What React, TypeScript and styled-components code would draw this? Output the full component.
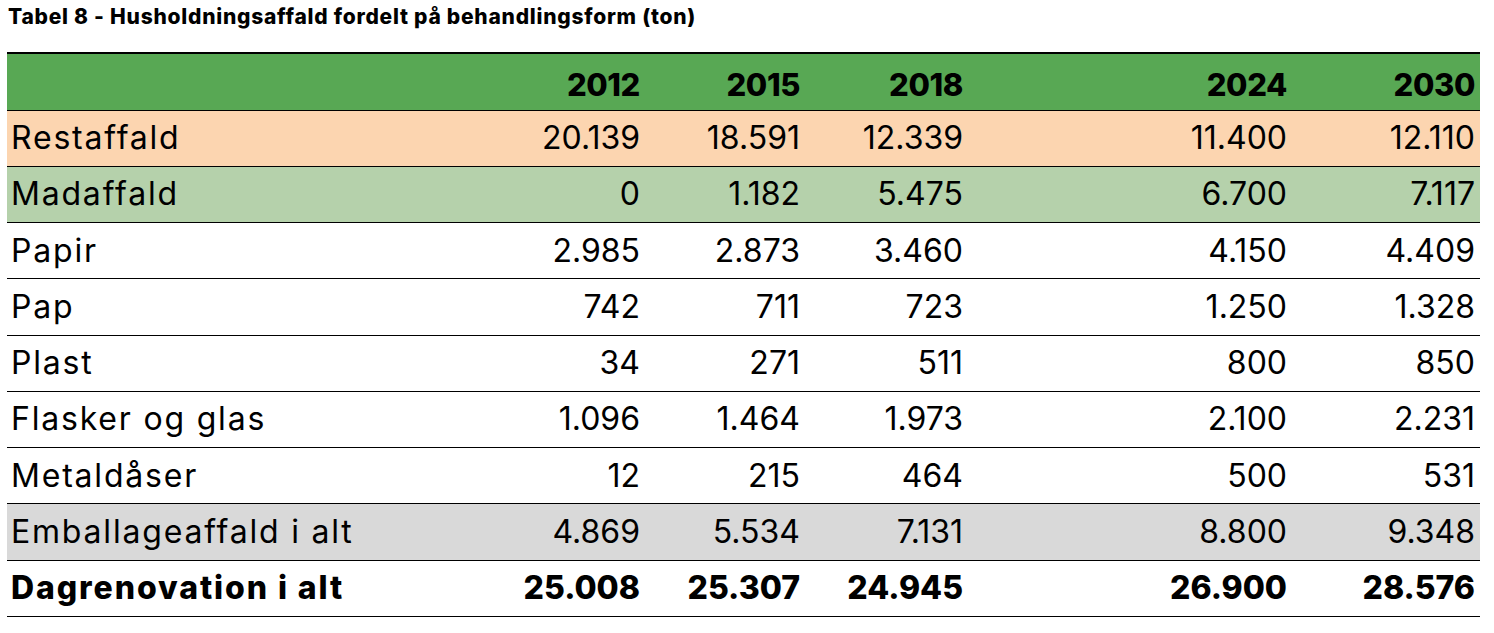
import React from 'react';
import styled, { createGlobalStyle } from 'styled-components';

const GlobalStyle = createGlobalStyle`
	html, body {
		margin: 0;
		padding: 0;
		background: #ffffff;
	}
	body {
		font-family: Inter, 'Noto Sans', sans-serif;
		color: #000000;
	}
`;

type Tone = 'plain' | 'rest' | 'mad' | 'sum' | 'total';

type Row = {
	label: string;
	values: string[];
	tone: Tone;
};

const YEARS = ['2012', '2015', '2018', '2024', '2030'];

const ROWS: Row[] = [
	{ label: 'Restaffald', values: ['20.139', '18.591', '12.339', '11.400', '12.110'], tone: 'rest' },
	{ label: 'Madaffald', values: ['0', '1.182', '5.475', '6.700', '7.117'], tone: 'mad' },
	{ label: 'Papir', values: ['2.985', '2.873', '3.460', '4.150', '4.409'], tone: 'plain' },
	{ label: 'Pap', values: ['742', '711', '723', '1.250', '1.328'], tone: 'plain' },
	{ label: 'Plast', values: ['34', '271', '511', '800', '850'], tone: 'plain' },
	{ label: 'Flasker og glas', values: ['1.096', '1.464', '1.973', '2.100', '2.231'], tone: 'plain' },
	{ label: 'Metaldåser', values: ['12', '215', '464', '500', '531'], tone: 'plain' },
	{ label: 'Emballageaffald i alt', values: ['4.869', '5.534', '7.131', '8.800', '9.348'], tone: 'sum' },
	{ label: 'Dagrenovation i alt', values: ['25.008', '25.307', '24.945', '26.900', '28.576'], tone: 'total' },
];

const BACKGROUNDS: Record<Tone, string> = {
	plain: 'transparent',
	rest: '#fcd5b0',
	mad: '#b5d1ab',
	sum: '#d9d9d9',
	total: 'transparent',
};

// column widths taken from where the numbers end in the reference
const COLUMN_WIDTHS = [478, 160, 160, 163, 324, 188];

const App = () => {
	return (
		<>
			<GlobalStyle />
			<Page>
				<Caption>Tabel 8 - Husholdningsaffald fordelt på behandlingsform (ton)</Caption>
				<Table>
					<colgroup>
						{COLUMN_WIDTHS.map((w, i) => (
							<col key={i} style={{ width: w }} />
						))}
					</colgroup>
					<thead>
						<HeaderRow>
							<HeaderCell />
							{YEARS.map((year) => (
								<HeaderCell key={year}>{year}</HeaderCell>
							))}
						</HeaderRow>
					</thead>
					<tbody>
						{ROWS.map((row) => (
							<BodyRow key={row.label} $tone={row.tone}>
								<LabelCell $bold={row.tone === 'total'}>{row.label}</LabelCell>
								{row.values.map((value, i) => (
									<NumberCell key={i} $bold={row.tone === 'total'}>
										{value}
									</NumberCell>
								))}
							</BodyRow>
						))}
					</tbody>
				</Table>
			</Page>
		</>
	);
};

const Page = styled.div`
	padding: 4px 14px 0 7px;
	width: 1473px;
`;

const Caption = styled.div`
	font-family: Inter, 'Noto Sans', sans-serif;
	font-weight: 800;
	font-size: 21px;
	line-height: 26px;
	letter-spacing: 0.75px;
	padding-left: 1px;
	height: 48px;
	white-space: nowrap;
`;

const Table = styled.table`
	width: 1473px;
	border-collapse: collapse;
	table-layout: fixed;
	border-top: 2px solid #000;
`;

const HeaderRow = styled.tr`
	background: #58a854;
	border-bottom: 1px solid #000;
`;

const HeaderCell = styled.th`
	height: 57px;
	box-sizing: border-box;
	padding: 6px 5px 0 6px;
	text-align: right;
	font-family: Inter, 'Noto Sans', sans-serif;
	font-weight: 800;
	font-size: 31px;
	letter-spacing: -0.4px;
	color: #000;
`;

const BodyRow = styled.tr<{ $tone: Tone }>`
	background: ${(p) => BACKGROUNDS[p.$tone]};
	border-bottom: 1px solid #000;
`;

const LabelCell = styled.td<{ $bold: boolean }>`
	height: 56.25px;
	box-sizing: border-box;
	padding: 0 4px;
	text-align: left;
	white-space: nowrap;
	font-family: Inter, 'Noto Sans', sans-serif;
	font-weight: ${(p) => (p.$bold ? 800 : 400)};
	font-size: 32px;
	line-height: 38px;
	letter-spacing: ${(p) => (p.$bold ? '1.9px' : '1.8px')};
`;

const NumberCell = styled(LabelCell)`
	padding: 0 5px 0 6px;
	text-align: right;
	letter-spacing: 0;
`;

export default App;
